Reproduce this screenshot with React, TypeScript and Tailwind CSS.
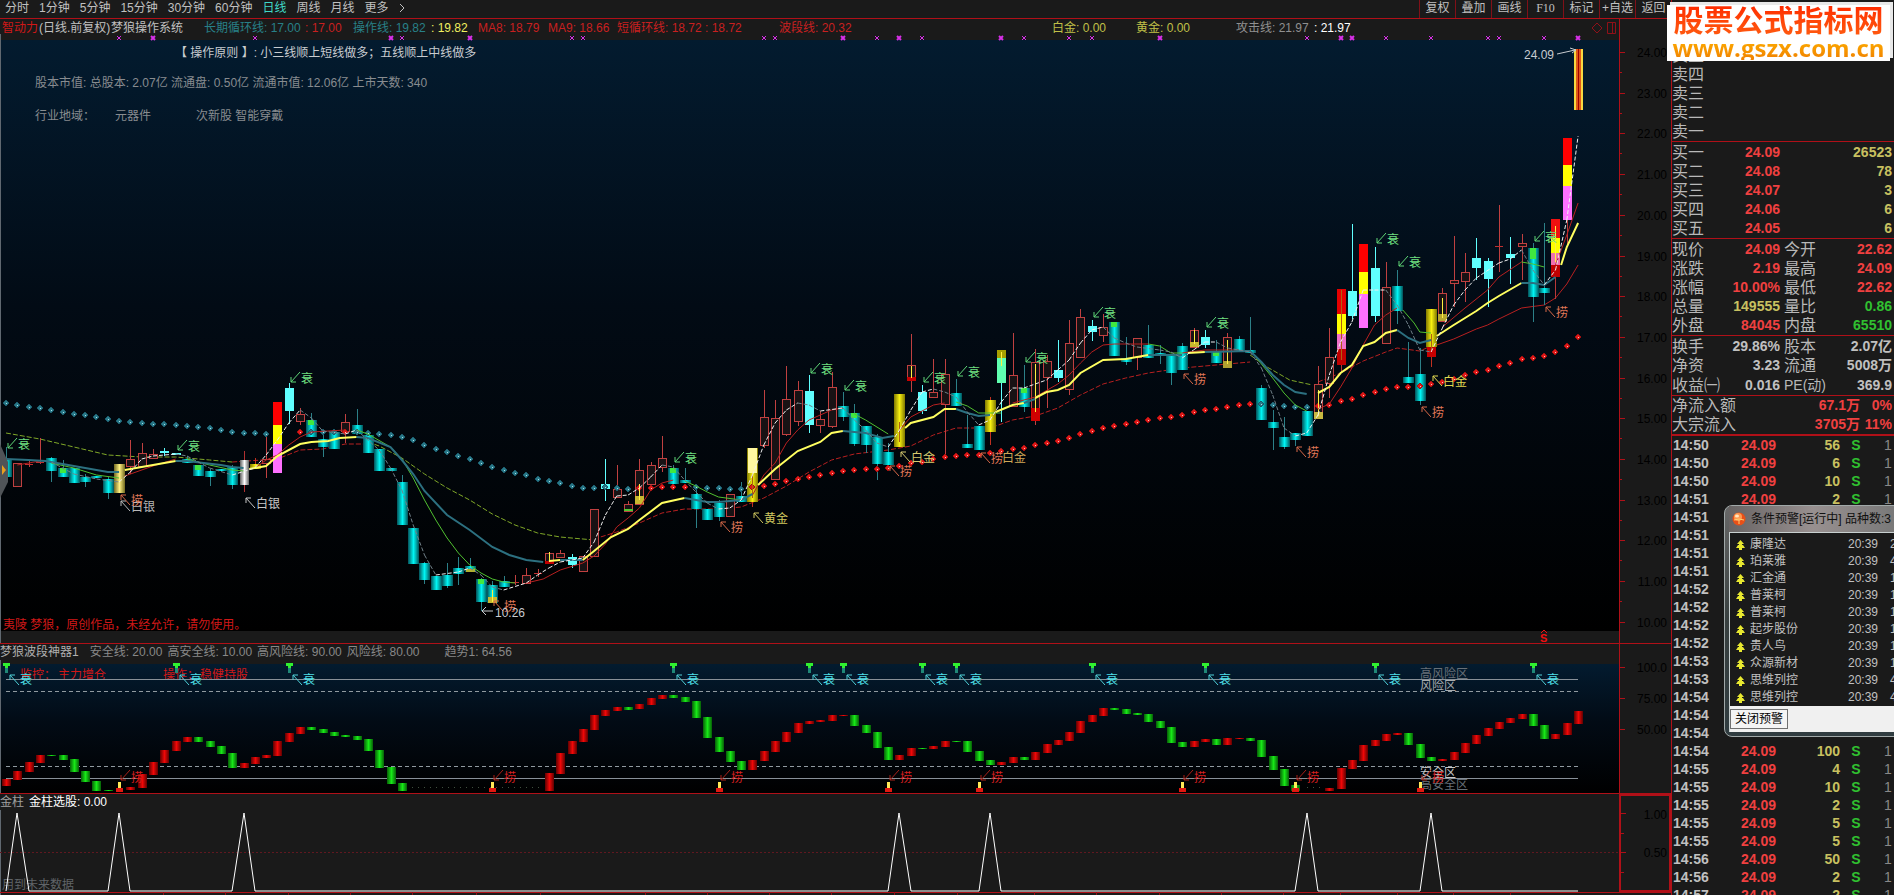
import React from 'react';
import { clsx } from 'clsx';

type Pt = [number, number];
type Segment = { color: string; pts: Pt[] };
type Candle = [number, string, number, number, number?, number?];

const STEP = 11.31;
const cx = (i: number) => Math.round(6 + i * STEP);

const toPath = (pts: Pt[]) =>
  pts.map(([i, y], n) => `${n === 0 ? 'M' : 'L'}${(6 + i * STEP).toFixed(1)} ${y}`).join(' ');

const periods = ['分时', '1分钟', '5分钟', '15分钟', '30分钟', '60分钟', '日线', '周线', '月线', '更多'];
const tools = ['复权', '叠加', '画线', 'F10', '标记', '+自选', '返回'];

// index, kind, body top, body bottom, high, low
// c = teal bar, b = bright bar, r = hollow, y = gold, p = pale gold, w = silver
const candles: Candle[] = [
  [0, 'c', 459, 477, 447], [1, 'r', 463, 486], [2, 'x', 464, 464, 461, 467], [3, 'x', 462, 462, 438, 464],
  [4, 'c', 458, 471, 457, 482], [5, 'c', 468, 477, 460], [6, 'c', 468, 483], [7, 'c', 477, 482, 474, 487],
  [8, 'c', 476, 478], [9, 'c', 479, 493, 477, 499], [10, 'p', 464, 493], [11, 'r', 459, 466, 440, 474],
  [12, 'r', 453, 466, 443], [13, 'r', 454, 458, 449], [14, 'b', 451, 453, 448, 456], [15, 'b', 453, 455],
  [16, 'c', 459, 463, 456], [17, 'c', 465, 476], [18, 'c', 471, 477, 469, 486], [19, 'c', 469, 471],
  [20, 'c', 467, 485, 465, 489], [21, 'w', 460, 485, 451, 492], [22, 'y', 464, 469, 458], [23, 'r', 459, 463, 435, 478],
  [25, 'b', 388, 411, 383, 424], [26, 'r', 414, 421, 408, 425], [27, 'c', 420, 437, 413], [28, 'c', 439, 447, 430, 457],
  [29, 'c', 432, 449], [30, 'r', 422, 431, 414, 443], [31, 'c', 425, 434, 409], [32, 'c', 435, 453],
  [33, 'c', 449, 471], [34, 'c', 468, 471], [35, 'c', 482, 525, 475], [36, 'c', 528, 564], [37, 'c', 563, 580, 562, 584],
  [38, 'c', 576, 590], [39, 'c', 575, 586, 563, 588], [40, 'c', 568, 574, 557, 585], [41, 'c', 566, 572, 558],
  [42, 'c', 579, 602, 578, 611], [43, 'c', 585, 603, 581], [44, 'c', 581, 587, 576], [45, 'x', 582, 582, 575, 585],
  [46, 'r', 575, 583, 568], [47, 'x', 573, 573, 569, 577], [48, 'r', 553, 563], [49, 'r', 553, 557, 550],
  [50, 'b', 557, 565, 554, 568], [51, 'r', 556, 571], [52, 'r', 509, 556], [53, 'b', 484, 489, 459, 501],
  [54, 'r', 489, 497, 465], [55, 'r', 504, 511, 501], [56, 'r', 470, 504, 459], [57, 'r', 465, 484, 462],
  [58, 'r', 458, 467, 436, 472], [59, 'c', 468, 484, 465], [60, 'c', 480, 483, 468], [61, 'c', 494, 509, 490, 528],
  [62, 'c', 509, 520], [63, 'c', 503, 517, 500, 521], [64, 'r', 494, 516], [65, 'c', 496, 502, 482],
  [66, 'y', 448, 502, 448, 507], [67, 'r', 417, 445, 390, 448], [68, 'r', 418, 479, 400], [69, 'r', 399, 434, 366, 436],
  [70, 'r', 390, 421, 381, 426], [71, 'b', 391, 425, 375, 433], [72, 'r', 419, 425, 411, 433], [73, 'r', 387, 426, 372, 428],
  [74, 'c', 406, 417, 392, 421], [75, 'c', 413, 444, 404, 446], [76, 'c', 426, 445, 426, 453], [77, 'c', 437, 464, 434, 480],
  [78, 'c', 452, 465, 443], [79, 'y', 394, 447], [80, 'r', 365, 380, 334, 392], [81, 'b', 392, 411, 385, 414],
  [82, 'r', 392, 397, 359], [83, 'r', 374, 404, 359, 457], [84, 'c', 393, 406, 379], [85, 'c', 444, 448, 415],
  [86, 'c', 426, 450], [87, 'y', 400, 432, 397, 445], [88, 'b', 358, 383, 350, 422], [89, 'r', 375, 406, 333],
  [90, 'c', 388, 407, 365, 412], [91, 'r', 362, 408, 349, 425], [92, 'r', 361, 377, 355, 408], [93, 'b', 370, 378, 340, 382],
  [94, 'r', 343, 389, 320, 395], [95, 'r', 317, 357, 309], [96, 'b', 326, 332, 320, 341], [97, 'r', 327, 335, 314, 342],
  [98, 'c', 322, 356], [99, 'c', 358, 362, 337, 365], [100, 'r', 338, 357, 338, 370], [101, 'c', 345, 358, 325],
  [102, 'c', 353, 356, 345, 364], [103, 'c', 356, 373, 356, 385], [104, 'c', 346, 370, 343], [105, 'r', 330, 347, 328],
  [106, 'b', 337, 345, 330, 348], [107, 'c', 351, 363, 340], [108, 'r', 337, 361, 333], [109, 'c', 339, 352, 336],
  [110, 'c', 350, 353, 317], [111, 'c', 388, 420, 385], [112, 'c', 422, 428, 410, 450], [113, 'c', 437, 447, 417, 449],
  [114, 'c', 433, 440, 433, 446], [115, 'c', 411, 436], [116, 'r', 384, 412, 366], [117, 'r', 357, 383, 328, 398],
  [119, 'b', 291, 316, 224, 319], [121, 'b', 268, 316, 247, 322], [122, 'r', 287, 343, 262], [123, 'c', 286, 311, 270, 324],
  [124, 'c', 377, 383, 342], [125, 'c', 374, 401, 348, 405], [126, 'y', 309, 347, 309, 367], [127, 'r', 293, 321, 288],
  [128, 'r', 280, 283, 236, 307], [129, 'r', 272, 281, 253, 302], [130, 'b', 258, 268, 238, 280], [131, 'b', 261, 279, 258, 307],
  [132, 'x', 246, 246, 205, 272], [133, 'b', 254, 258, 237, 284], [134, 'r', 243, 246, 234, 280], [135, 'c', 248, 297, 243, 322],
  [136, 'c', 288, 293, 223, 305],
];

// solid blocks painted over or instead of a body
const blocks: [number, string, number, number][] = [
  [24, '#ff0000', 402, 425], [24, '#ffff00', 425, 444], [24, '#ff70ff', 444, 473],
  [118, '#e60000', 289, 314], [118, '#ffff00', 314, 334], [118, '#f070c8', 334, 349], [118, '#c00000', 349, 365],
  [120, '#ff0000', 244, 272], [120, '#ffff00', 272, 294], [120, '#ff70ff', 294, 328],
  [126, '#c80000', 347, 357], [137, '#f01010', 219, 238], [137, '#ffff00', 238, 253],
  [137, '#f070b0', 253, 265], [137, '#c00000', 265, 277],
  [138, '#ff0000', 138, 165], [138, '#ffff00', 165, 186], [138, '#ff70ff', 186, 220],
  [80, '#c80000', 377, 381], [91, '#d00000', 408, 421], [88, '#a8a000', 350, 358], [88, '#60ffb0', 358, 383],
  [56, '#c8b830', 496, 504], [105, '#c8b830', 342, 347], [108, '#b0a030', 361, 368], [116, '#c8b840', 412, 419],
  [127, '#b8a830', 314, 321], [41, '#b0b030', 569, 572], [43, '#c8b830', 597, 603], [55, '#50c830', 509, 511],
  [48, '#c00000', 561, 564], [66, '#fff8a0', 448, 473],
];

const greenCaps: Pt[] = [[5, 468], [17, 465], [27, 420], [42, 579], [59, 468], [75, 413], [90, 388], [98, 322], [107, 351], [135, 248]];
const cores: [number, number, number][] = [
  [43, 590, 602], [48, 552, 562], [80, 366, 378], [91, 364, 412], [105, 330, 344], [108, 340, 364], [116, 390, 416],
  [118, 290, 360], [126, 334, 350], [127, 298, 318], [88, 352, 366], [66, 474, 498], [79, 422, 442], [137, 226, 262], [56, 484, 500],
];
const darkCores = [66, 79, 118, 126];

const trendLine: Segment[] = [
  { color: 'teal', pts: [[0, 459], [2, 460], [3.5, 461], [5, 464], [7, 468], [9, 472], [10, 472]] },
  { color: 'gold', pts: [[10.5, 470], [12, 467], [14, 463], [15, 461]] },
  { color: 'teal', pts: [[15, 461], [16, 461], [17.5, 463], [19, 465], [20, 467], [21, 468]] },
  { color: 'gold', pts: [[21.5, 469], [23, 466], [24, 456], [26, 444], [27, 442], [28.5, 441], [29.5, 438], [31, 437]] },
  { color: 'teal', pts: [[31, 437], [32, 438], [34, 447], [35, 460], [36, 474], [37, 491], [39, 515], [41, 530], [43, 547], [44.5, 555], [46, 560], [47.5, 562]] },
  { color: 'gold', pts: [[48, 561], [49, 560]] },
  { color: 'teal', pts: [[49, 560], [51, 560]] },
  { color: 'gold', pts: [[51, 560], [52, 551], [53.5, 537], [55, 529], [56, 520], [58, 503], [60, 498]] },
  { color: 'teal', pts: [[60, 498], [62, 502], [63, 502], [65, 500], [66, 494]] },
  { color: 'gold', pts: [[66.5, 485], [68, 469], [70, 451], [72, 442], [73, 433], [74, 431]] },
  { color: 'teal', pts: [[74, 431], [76, 433], [77.5, 438], [78.5, 436]] },
  { color: 'gold', pts: [[79.5, 428], [80, 423], [82, 417], [83, 409], [84, 409]] },
  { color: 'teal', pts: [[84, 409], [85, 413], [86, 416], [87, 415]] },
  { color: 'gold', pts: [[87.5, 412], [89, 405], [90, 403]] },
  { color: 'teal', pts: [[90, 403], [91, 399]] },
  { color: 'gold', pts: [[91, 398], [92, 392], [93, 390], [94, 385], [95, 373], [97, 360], [99, 359], [101, 355]] },
  { color: 'teal', pts: [[101, 355], [104, 355]] },
  { color: 'gold', pts: [[104.5, 353], [106, 352]] },
  { color: 'teal', pts: [[106, 352], [110, 351], [111, 362], [112, 375], [113, 385], [114, 392], [115, 394]] },
  { color: 'gold', pts: [[116, 393], [117, 387], [118, 373], [119, 365], [120, 346], [121, 342], [122, 333], [123, 330]] },
  { color: 'teal', pts: [[123, 330], [124, 338], [125, 343], [126, 340]] },
  { color: 'gold', pts: [[126.5, 336], [128, 325], [130, 311], [131, 303], [132, 296], [134, 283]] },
  { color: 'teal', pts: [[134, 283], [135, 283], [136, 285], [137, 277]] },
  { color: 'gold', pts: [[137.5, 265], [138, 247], [139, 223]] },
];

const shortCycle: Segment[] = [
  { color: 'red', pts: [[1, 465], [3, 461]] },
  { color: 'green', pts: [[4, 463], [6, 468], [8, 475], [10, 478]] },
  { color: 'red', pts: [[10.5, 476], [13, 466], [15, 459]] },
  { color: 'green', pts: [[16, 459], [18, 465], [20, 470], [21, 471]] },
  { color: 'red', pts: [[22, 468], [23, 460], [24, 455], [25, 445], [26, 437], [27, 432], [30, 430]] },
  { color: 'green', pts: [[31, 430], [32, 434], [34, 447], [35, 459], [36, 478], [37, 500], [38, 520], [39, 538], [40, 553], [41, 565], [42, 573], [43, 579], [44, 582], [45, 583]] },
  { color: 'red', pts: [[46, 583], [47.5, 579], [49, 570], [51, 563], [52, 556], [53, 544], [54, 527], [55, 518], [56, 508], [57, 490], [58, 483], [59, 480]] },
  { color: 'green', pts: [[60, 481], [61, 486], [62, 492], [63, 497], [65, 500]] },
  { color: 'red', pts: [[66, 495], [67, 475], [68, 463], [69, 443], [70, 430], [71, 420], [73, 410], [74, 408]] },
  { color: 'green', pts: [[75, 414], [76, 420], [78, 434]] },
  { color: 'red', pts: [[79, 430], [80, 417], [82, 405], [83, 403]] },
  { color: 'green', pts: [[84, 402], [85, 406], [86, 413], [88, 413]] },
  { color: 'red', pts: [[89, 403], [91, 397], [93, 384], [94, 375], [95, 363], [96, 352], [97, 345], [98, 344], [101, 344]] },
  { color: 'green', pts: [[101, 344], [102, 346], [103, 353], [104, 353]] },
  { color: 'red', pts: [[104, 353], [106, 350], [109, 350]] },
  { color: 'green', pts: [[110, 350], [111, 364], [112, 378], [113, 393], [114, 405], [115, 411]] },
  { color: 'red', pts: [[116, 409], [117, 404], [118, 387], [119, 368], [120, 345], [121, 325], [122, 315], [123, 308]] },
  { color: 'green', pts: [[123.5, 310], [124.5, 323], [125, 332], [126, 333]] },
  { color: 'red', pts: [[127, 327], [129, 308], [131, 290], [132, 277], [134, 262]] },
  { color: 'green', pts: [[134, 262], [135, 264], [136, 267]] },
  { color: 'red', pts: [[137, 265], [138, 235], [139, 203]] },
];

const swingLine: Segment[] = [
  { color: 'olive', pts: [[0, 433], [3, 439], [6, 447], [9, 455], [12, 457], [15, 457], [18, 460], [20, 462]] },
  { color: 'red', pts: [[20, 462], [24, 459], [26, 450], [28, 449], [30, 444], [32, 444]] },
  { color: 'olive', pts: [[32, 442], [33, 446], [35, 458], [37, 474], [39, 488], [41, 500], [43, 514], [45, 525], [47, 533], [49, 537], [52, 540]] },
  { color: 'red', pts: [[52, 539], [54, 532], [56, 523], [58, 513], [60, 509], [63, 509], [65, 507], [67, 498], [69, 486], [71, 472], [73, 460], [75, 454], [78, 450], [80, 446], [82, 435], [84, 428], [87, 428], [89, 420], [91, 416], [93, 408], [95, 395], [97, 384], [99, 378], [101, 373], [104, 368], [107, 365], [110, 362]] },
  { color: 'olive', pts: [[110, 355], [111.5, 367], [113.5, 380], [115.5, 385]] },
  { color: 'red', pts: [[116, 382], [118, 373], [120, 361], [122, 352], [123, 348], [125, 351], [126, 346]] },
];

const swingTail: Pt[] = [[126.5, 345], [128, 339], [130, 329], [131, 325], [132, 319], [134, 308], [136, 305], [137, 298], [138, 284], [139, 265]];

const attackLine: Pt[] = [
  [4, 462], [6, 474], [8, 479], [10, 482], [11, 472], [12, 459], [13, 456], [15, 454], [16, 456], [18, 468], [20, 475],
  [22, 468], [23, 455], [24, 440], [25, 423], [26, 410], [27, 418], [28, 431], [30, 434], [31, 430], [33, 450], [34, 468],
  [35, 490], [36, 525], [37, 555], [38, 575], [40, 572], [41, 568], [42, 575], [43, 587], [44, 590], [46, 583], [47, 575],
  [48, 568], [49, 562], [51, 558], [52, 542], [53, 515], [54, 496], [55, 495], [56, 488], [57, 477], [58, 465], [59, 467],
  [60, 480], [61, 492], [62, 503], [63, 509], [64, 508], [65, 500], [66, 475], [67, 445], [68, 423], [69, 410], [70, 403],
  [71, 405], [72, 411], [74, 408], [75, 420], [76, 430], [77, 443], [78, 447], [79, 430], [80, 410], [81, 392], [82, 389],
  [83, 392], [84, 397], [85, 412], [86, 425], [87, 420], [88, 402], [89, 388], [90, 388], [91, 384], [92, 380], [93, 370],
  [94, 360], [95, 343], [96, 330], [97, 327], [98, 338], [99, 343], [100, 347], [102, 350], [103, 352], [104, 358],
  [105, 350], [106, 342], [107, 342], [108, 348], [110, 352], [111, 368], [112, 395], [113, 428], [114, 436], [115, 433],
  [116, 415], [117, 375], [118, 342], [119, 322], [120, 290], [121, 290], [122, 290], [123, 305], [124, 325], [125, 350],
  [126, 352], [127, 328], [128, 305], [129, 290], [130, 278], [132, 263], [133, 259], [134, 250], [135, 270], [136, 285],
  [137, 270], [138, 220], [139, 136],
];

// white while the line climbs, grey while it falls
const attackLegs = (rising: boolean) =>
  attackLine
    .slice(1)
    .map((p, n) => [attackLine[n], p] as Pt[])
    .filter(([a, b]) => b[1] <= a[1] === rising)
    .map(toPath)
    .join(' ');

const cycleDots = [
  403, 405, 407, 408, 410, 412, 414, 415, 417, 419, 421, 422, 423, 424, 424, 425, 426, 427, 428, 430, 432, 433, 433, 434,
  434, 433, 432, 432, 432, 432, 432, 432, 433, 434, 435, 437, 440, 445, 449, 452, 456, 459, 463, 467, 470, 473, 475, 479,
  481, 483, 486, 488, 488, 487, 488, 489, 488, 488, 487, 487, 487, 487, 488, 488, 489, 489, 487, 486, 484, 481, 479, 477,
  475, 473, 471, 470, 469, 469, 468, 466, 463, 462, 459, 457, 456, 455, 455, 453, 451, 449, 448, 445, 443, 441, 438, 434,
  431, 428, 426, 424, 422, 420, 418, 417, 415, 412, 410, 409, 407, 405, 404, 404, 405, 406, 407, 407, 406, 405, 401, 399,
  395, 392, 389, 387, 387, 386, 384, 382, 379, 375, 372, 370, 366, 363, 359, 358, 356, 352, 346, 337,
];

const dotIsRed = (i: number) => (i >= 24 && i <= 26) || i === 30 || (i >= 56 && i <= 60) || (i >= 66 && i <= 110) || i >= 116;

// marker index and label centre
const fading: Pt[] = [[0, 444], [15, 446], [25, 378], [59, 458], [71, 369], [74, 386], [81, 378], [84, 372], [90, 358], [96, 313], [106, 323], [121, 239], [123, 262], [135, 237]];
const fishing: Pt[] = [[10, 500], [43, 606], [63, 527], [78, 471], [86, 458], [104, 379], [114, 452], [125, 412], [136, 312]];
const peaks = [0, 15, 25, 59, 71, 74, 81, 84, 96, 106, 121, 135];
const metals: [number, number, string, string][] = [
  [10, 506, '白银', '#b8b8b8'], [21, 503, '白银', '#c8c8c8'], [66, 518, '黄金', '#d0c860'],
  [79, 457, '白金', '#d8cc70'], [87, 457, '白金', '#d0a858'], [126, 381, '白金', '#e0d850'],
];

const crosses = [10, 13, 22, 34, 35, 41, 50, 51, 67, 68, 74, 77, 79, 81, 88, 90, 94, 96, 102, 115, 118, 119, 122, 126, 131, 132, 136, 139];
const boldCrosses = [13, 34, 41, 74, 79, 88, 102, 118, 119, 139];

const prices = ['24.00', '23.00', '22.00', '21.00', '20.00', '19.00', '18.00', '17.00', '16.00', '15.00', '14.00', '13.00', '12.00', '11.00', '10.00'];

// trend oscillator bars, one per day: colour, top, bottom
const R = 'r';
const G = 'g';
const bars: ([string, number, number] | null)[] = [
  [R, 779, 786], [R, 771, 780], [R, 762, 772], [R, 755, 763], [G, 755, 756], [G, 755, 760], [G, 759, 772], [G, 771, 782],
  [G, 781, 791], [G, 790, 791], null, [R, 787, 790], [R, 774, 788], [R, 762, 775], [R, 750, 763], [R, 741, 751],
  [R, 737, 742], [G, 737, 742], [G, 741, 747], [G, 746, 754], [G, 753, 768], [R, 763, 768], [R, 757, 764], [R, 755, 758],
  [R, 741, 756], [R, 733, 742], [R, 727, 734], [G, 727, 730], [G, 729, 733], [G, 732, 736], [G, 735, 737], [G, 736, 740],
  [G, 739, 751], [G, 750, 768], [G, 767, 784], [G, 783, 791], null, null, null, null, null, null, null, null, null, null,
  null, null, [R, 773, 791], [R, 753, 774], [R, 741, 754], [R, 729, 742], [R, 715, 730], [R, 710, 716], [R, 707, 711],
  [G, 707, 710], [R, 704, 709], [R, 698, 705], [R, 695, 699], [G, 695, 698], [G, 697, 702], [G, 701, 718], [G, 717, 738],
  [G, 737, 752], [G, 751, 762], [G, 761, 770], [R, 760, 770], [R, 751, 761], [R, 741, 752], [R, 732, 742], [R, 723, 733],
  [R, 721, 724], [R, 720, 722], [R, 715, 721], [R, 715, 716], [G, 715, 726], [G, 725, 733], [G, 732, 748], [G, 747, 760],
  [R, 755, 760], [R, 748, 756], [G, 748, 749], [R, 746, 749], [R, 741, 747], [G, 741, 742], [G, 741, 752], [G, 751, 761],
  [G, 760, 765], [R, 762, 765], [R, 757, 763], [G, 757, 760], [R, 752, 760], [R, 744, 753], [R, 740, 745], [R, 732, 741],
  [R, 721, 733], [R, 715, 722], [R, 708, 716], [G, 708, 710], [G, 709, 714], [G, 713, 715], [G, 714, 722], [G, 721, 728],
  [G, 727, 743], [G, 742, 747], [R, 741, 747], [R, 739, 742], [G, 739, 745], [R, 738, 745], [R, 738, 739], [G, 738, 741],
  [G, 740, 757], [G, 756, 770], [G, 769, 786], [G, 785, 791], null, null, [R, 788, 791], [R, 768, 789], [R, 760, 769],
  [R, 745, 761], [R, 740, 746], [R, 734, 741], [R, 733, 735], [G, 733, 745], [G, 744, 758], [G, 757, 761], [R, 759, 761],
  [R, 752, 760], [R, 743, 753], [R, 735, 744], [R, 728, 736], [R, 722, 729], [R, 718, 723], [R, 714, 719], [G, 714, 726],
  [G, 725, 739], [R, 734, 739], [R, 723, 735], [R, 711, 724],
];

const spikes = [1, 10, 21, 79, 87, 115, 126];
const spikePath = `M${cx(0)} 891 ${spikes.map((i) => `L${cx(i - 1)} 891 L${cx(i)} 813 L${cx(i + 1)} 891`).join(' ')} L${cx(139)} 891`;

const buyRows = [
  ['买一', '24.09', '26523'],
  ['买二', '24.08', '78'],
  ['买三', '24.07', '3'],
  ['买四', '24.06', '6'],
  ['买五', '24.05', '6'],
];

const RED = 'text-[#f04040]';
const YEL = 'text-[#c8c060]';
const GRN = 'text-[#30c030]';
const GRY = 'text-[#c0c0c0]';

const quoteRows = [
  ['现价', '24.09', RED, '今开', '22.62', RED],
  ['涨跌', '2.19', RED, '最高', '24.09', RED],
  ['涨幅', '10.00%', RED, '最低', '22.62', RED],
  ['总量', '149555', YEL, '量比', '0.86', GRN],
  ['外盘', '84045', RED, '内盘', '65510', GRN],
];

const shareRows = [
  ['换手', '29.86%', GRY, '股本', '2.07亿', GRY],
  ['净资', '3.23', GRY, '流通', '5008万', GRY],
  ['收益㈠', '0.016', GRY, 'PE(动)', '369.9', GRY],
];

const ticks: [string, string?][] = [
  ['14:50', '56'], ['14:50', '6'], ['14:50', '10'], ['14:51', '2'], ['14:51'], ['14:51'], ['14:51'], ['14:51'],
  ['14:52'], ['14:52'], ['14:52'], ['14:52'], ['14:53'], ['14:53'], ['14:54'], ['14:54'], ['14:54'],
  ['14:54', '100'], ['14:55', '4'], ['14:55', '10'], ['14:55', '2'], ['14:55', '5'], ['14:55', '5'],
  ['14:56', '50'], ['14:56', '2'], ['14:57', '2'],
];

const alerts = [
  ['康隆达', '2'], ['珀莱雅', '4'], ['汇金通', '1'], ['普莱柯', '1'], ['普莱柯', '1'],
  ['起步股份', '1'], ['贵人鸟', '1'], ['众源新材', '1'], ['思维列控', '4'], ['思维列控', '4'],
];

const lineColors: Record<string, string> = {
  teal: '#2c7080',
  gold: '#ffff60',
  red: '#b82020',
  green: '#50c030',
  olive: '#80a828',
};

const wickColors: Record<string, string> = { c: '#2c8088', b: '#60ffff', r: '#c04040', x: '#c04040', y: '#c03020', p: '#c0a030', w: '#b03030' };
const bodyFills: Record<string, string> = { c: 'url(#bar-teal)', b: '#60ffff', y: 'url(#bar-gold)', p: 'url(#bar-pale)', w: 'url(#bar-silver)' };

const CandleShape = ({ c }: { c: Candle }) => {
  const [i, kind, top, bottom, high = top, low = bottom] = c;
  const x = cx(i);
  const wide = kind === 'y' || kind === 'p' || kind === 'c' ? 11 : 9;
  return (
    <g shapeRendering="crispEdges">
      {low > high && <line x1={x} x2={x} y1={high} y2={low} stroke={wickColors[kind]} />}
      {kind === 'x' && <line x1={x - 4} x2={x + 4} y1={top} y2={top} stroke="#c03030" />}
      {kind === 'r' && (
        <rect x={x - 4} y={top} width="8" height={bottom - top} fill="#181214" stroke="#c04040" />
      )}
      {bodyFills[kind] && (
        <rect x={x - (wide - 1) / 2} y={top} width={wide} height={bottom - top} fill={bodyFills[kind]} />
      )}
    </g>
  );
};

const Arrow = ({ x, y, color, dir }: { x: number; y: number; color: string; dir: 'down' | 'up' }) => (
  <path
    d={dir === 'down' ? `M${x + 9} ${y - 9} L${x} ${y + 1} M${x} ${y - 4} V${y + 1} H${x + 5}` : `M${x + 9} ${y + 10} L${x} ${y} M${x} ${y + 5} V${y} H${x + 5}`}
    stroke={color}
    fill="none"
  />
);

const MainChart = () => (
  <svg viewBox="0 34 1671 609" className="block w-full h-auto" fontSize="12">
    <defs>
      <linearGradient id="sky" x1="0" y1="0" x2="0" y2="1">
        <stop offset="0" stopColor="#031b2f" />
        <stop offset="0.45" stopColor="#020b15" />
        <stop offset="1" stopColor="#000000" />
      </linearGradient>
      <linearGradient id="bar-teal">
        <stop offset="0" stopColor="#045058" />
        <stop offset="0.3" stopColor="#00b8b8" />
        <stop offset="0.5" stopColor="#00f4f4" />
        <stop offset="0.7" stopColor="#00b8b8" />
        <stop offset="1" stopColor="#045058" />
      </linearGradient>
      <linearGradient id="bar-gold">
        <stop offset="0" stopColor="#807800" />
        <stop offset="0.5" stopColor="#f8f010" />
        <stop offset="1" stopColor="#807800" />
      </linearGradient>
      <linearGradient id="bar-pale">
        <stop offset="0" stopColor="#706820" />
        <stop offset="0.5" stopColor="#fff080" />
        <stop offset="1" stopColor="#706820" />
      </linearGradient>
      <linearGradient id="bar-silver">
        <stop offset="0" stopColor="#606060" />
        <stop offset="0.5" stopColor="#ffffff" />
        <stop offset="1" stopColor="#606060" />
      </linearGradient>
    </defs>
    <rect x="1" y="40" width="1618" height="591" fill="url(#sky)" />
    <path d="M0.5 34 V643" stroke="#606870" />

    {crosses.map((i) => (
      <path
        key={i}
        d={`M${cx(i) - 2} 36 l4 4 m0 -4 l-4 4`}
        stroke="#d830e8"
        strokeWidth={boldCrosses.includes(i) ? 2 : 1}
      />
    ))}

    <text x="175" y="57" fill="#c8ccd0">【 操作原则 】: 小三线顺上短线做多；五线顺上中线做多</text>
    <text x="35" y="87" fill="#888c90">股本市值: 总股本: 2.07亿 流通盘: 0.50亿 流通市值: 12.06亿 上市天数: 340</text>
    <text x="35" y="120" fill="#888c90">行业地域：</text>
    <text x="115" y="120" fill="#888c90">元器件</text>
    <text x="196" y="120" fill="#888c90">次新股 智能穿戴</text>

    {swingLine.map((s, n) => (
      <path key={n} d={toPath(s.pts)} stroke={lineColors[s.color]} strokeDasharray="5 2" fill="none" />
    ))}
    <path d={toPath(swingTail)} stroke="#b82020" fill="none" />
    {candles.map((c) => <CandleShape key={c[0]} c={c} />)}
    {cycleDots.map((y, i) =>
      i === 139 || ![24, 25].includes(i) ? (
        <g key={i}>
          <path
            d={`M${cx(i)} ${y - 3} L${cx(i) + 3} ${y} L${cx(i)} ${y + 3} L${cx(i) - 3} ${y} Z`}
            fill={dotIsRed(i) ? '#e01818' : '#287888'}
            stroke={dotIsRed(i) ? '#a01010' : '#1c5c6c'}
          />
          <rect x={cx(i)} y={y} width="1" height="1" fill={dotIsRed(i) ? '#ffc0b8' : '#a8e0e8'} />
        </g>
      ) : null
    )}
    <g shapeRendering="crispEdges">
      <path d={`M${cx(137)} 277 V299 M${cx(138)} 220 V247 M${cx(118)} 365 V372`} stroke="#b83838" />
      {blocks.map(([i, color, top, bottom], n) => (
        <rect key={n} x={cx(i) - 4} y={top} width="9" height={bottom - top} fill={color} />
      ))}
      {greenCaps.map(([i, y]) => (
        <rect key={i} x={cx(i) - 3} y={y} width="6" height={i === 135 ? 11 : 5} fill="#40e840" />
      ))}
      {cores.map(([i, a, b]) => (
        <line key={i} x1={cx(i)} x2={cx(i)} y1={a} y2={b} stroke={darkCores.includes(i) ? '#b06010' : '#fff040'} />
      ))}
      {/* last day */}
      <rect x={cx(139) - 4} y="49" width="9" height="61" fill="#f8d840" />
      <rect x={cx(139) - 2} y="49" width="5" height="61" fill="#e05818" />
      <rect x={cx(139)} y="49" width="1" height="61" fill="#a00000" />
    </g>
    {shortCycle.map((s, n) => (
      <path key={n} d={toPath(s.pts)} stroke={lineColors[s.color]} fill="none" />
    ))}
    {trendLine.map((s, n) => (
      <path key={n} d={toPath(s.pts)} stroke={lineColors[s.color]} strokeWidth="2" fill="none" />
    ))}
    <path d={attackLegs(true)} stroke="#f0f0f0" strokeDasharray="4 2" fill="none" />
    <path d={attackLegs(false)} stroke="#708088" strokeDasharray="4 2" fill="none" />

    {fading.map(([i, y]) => (
      <g key={i}>
        <Arrow x={cx(i) + 2} y={y + 3} color="#60d878" dir="down" />
        <text x={cx(i) + 12} y={y + 5} fill="#70e080">衰</text>
      </g>
    ))}
    {metals.map(([i, y, label, color]) => (
      <g key={i}>
        {i !== 87 && <Arrow x={cx(i) + 2} y={y - 5} color={color} dir="up" />}
        <text x={cx(i) + 12} y={y + 5} fill={color}>{label}</text>
      </g>
    ))}
    {fishing.map(([i, y]) => (
      <g key={i}>
        <Arrow x={cx(i) + 2} y={y - 5} color="#d86848" dir="up" />
        <text x={cx(i) + 12} y={y + 5} fill="#e07858">捞</text>
      </g>
    ))}

    <text x="1524" y="59" fill="#c8ccd0">24.09</text>
    <path d="M1557 54 L1575 50 M1570 48 L1576 50 L1572 53" stroke="#c8ccd0" fill="none" />
    <text x="495" y="617" fill="#c8ccd0">10.26</text>
    <path d="M482 611 H493 M486 607 L482 611 L486 615" stroke="#c8ccd0" fill="none" />
    <text x="3" y="629" fill="#d01818">夷陵 梦狼，原创作品，未经允许，请勿使用。</text>
    <text x="1540" y="642" fill="#f01010" fontWeight="bold" fontSize="11">S</text>
    <path d="M1541 633 L1544 630 L1547 633" stroke="#f01010" fill="none" />

    {/* side handle */}
    <path d="M0 444 L8 462 V482 L0 498 Z" fill="#505458" />
    <path d="M2 465 L6 470 L2 475 Z" fill="#e8a020" />

    <path d="M1619.5 34 V643" stroke="#b01018" />
    {prices.map((p, n) => (
      <g key={p}>
        <path d={`M1619 ${52 + Math.round(n * 40.7)}.5 h6`} stroke="#b01018" />
        {n < 14 && <path d={`M1619 ${72 + Math.round(n * 40.7)}.5 h3`} stroke="#b01018" />}
        <text x="1667" y={57 + Math.round(n * 40.7)} textAnchor="end" fill="#000000">{p}</text>
      </g>
    ))}
  </svg>
);

const WaveChart = () => (
  <svg viewBox="0 660 1671 133" className="block w-full h-auto" fontSize="12">
    <defs>
      <linearGradient id="bar-red">
        <stop offset="0" stopColor="#600000" />
        <stop offset="0.5" stopColor="#f00808" />
        <stop offset="1" stopColor="#600000" />
      </linearGradient>
      <linearGradient id="bar-green">
        <stop offset="0" stopColor="#066006" />
        <stop offset="0.5" stopColor="#18e818" />
        <stop offset="1" stopColor="#066006" />
      </linearGradient>
    </defs>
    <rect x="1" y="664" width="1618" height="129" fill="url(#sky)" />
    <path d="M0.5 660 V793" stroke="#606870" />
    <text x="20" y="679" fill="#d01818">监控：</text>
    <text x="58" y="679" fill="#d01818">主力增仓</text>
    <text x="163" y="679" fill="#d01818">操作：</text>
    <text x="200" y="679" fill="#d01818">稳健持股</text>
    <g shapeRendering="crispEdges">
      <path d="M6 679.5 H1578 M6 778.5 H1578" stroke="#889098" />
      <path d="M6 691.5 H1578 M6 766.5 H1578" stroke="#909aa0" strokeDasharray="4 3" />
      <path d="M412 787.5 H540 M1307 787.5 H1322" stroke="#405040" strokeDasharray="1 5" />
      {bars.map((b, i) =>
        b ? (
          <rect key={i} x={cx(i) - 4} y={b[1]} width="9" height={b[2] - b[1]} fill={b[0] === R ? 'url(#bar-red)' : 'url(#bar-green)'} />
        ) : null
      )}
    </g>
    <text x="1420" y="678" fill="#687078">高风险区</text>
    <text x="1420" y="690" fill="#a8acb0">风险区</text>
    <text x="1420" y="777" fill="#c8c8c8">安全区</text>
    <text x="1420" y="789" fill="#687078">高安全区</text>
    {peaks.map((i) => (
      <g key={i}>
        <rect x={cx(i) - 1} y="666" width="3" height="7" fill="#208878" />
        <rect x={cx(i) - 3} y="663" width="7" height="3" fill="#30f030" />
        <rect x={cx(i) - 1} y="666" width="3" height="2" fill="#30f030" />
        <Arrow x={cx(i) + 4} y={675} color="#50d0d8" dir="up" />
        <text x={cx(i) + 14} y="684" fill="#50e0e8">衰</text>
      </g>
    ))}
    {fishing.slice(0, 8).map(([i]) => (
      <g key={i}>
        <rect x={cx(i) - 1} y="782" width="3" height="6" fill="#ffe858" />
        <rect x={cx(i) - 3} y="788" width="7" height="4" fill="#e01810" />
        <Arrow x={cx(i) + 2} y={779} color="#a82018" dir="down" />
        <text x={cx(i) + 12} y="782" fill="#d82020">捞</text>
      </g>
    ))}
    <path d="M1619.5 660 V793" stroke="#b01018" />
    {[['100.0', 667], ['75.00', 698], ['50.00', 729]].map(([label, y]) => (
      <g key={label}>
        <path d={`M1619 ${y}.5 h6`} stroke="#b01018" />
        <text x="1667" y={Number(y) + 5} textAnchor="end" fill="#000000">{label}</text>
      </g>
    ))}
  </svg>
);

const PickChart = () => (
  <svg viewBox="0 810 1671 85" className="block w-full h-auto" fontSize="12">
    <path d="M0.5 810 V895" stroke="#606870" />
    <path d="M0 852.5 H1619" stroke="#601820" strokeDasharray="2 2" />
    <text x="2" y="889" fill="#606468">用到未来数据</text>
    <path d={spikePath} stroke="#ffffff" fill="none" />
    <path d="M0 892.5 H1671" stroke="#b01018" />
    {[163, 225, 288, 350, 412, 476, 540, 645, 707, 769, 831, 894, 957, 1034, 1096, 1159, 1221, 1283, 1340, 1397, 1453, 1510].map((x) => (
      <path key={x} d={`M${x}.5 892 V895`} stroke="#901018" />
    ))}
    <path d="M1620 810 V892 M1670 810 V892 M1619 891 H1671" stroke="#b01018" strokeWidth="2" />
    <path d="M1621 813.5 h5 M1621 833.5 h3 M1621 852.5 h5 M1621 872.5 h3" stroke="#b01018" />
    <text x="1667" y="819" textAnchor="end" fill="#000000">1.00</text>
    <text x="1667" y="857" textAnchor="end" fill="#000000">0.50</text>
  </svg>
);

const QuoteTable = ({ rows }: { rows: string[][] }) => (
  <table className="w-full table-fixed border-collapse">
    <tbody>
      {rows.map((r) => (
        <tr key={r[0]} className="h-[19px] leading-[19px]">
          <th scope="row" className="w-[50px] p-0 text-left text-base leading-[19px] font-normal whitespace-nowrap">{r[0]}</th>
          <td className={clsx('w-[58px] p-0 text-right text-sm leading-[19px] font-bold', r[2])}>{r[1]}</td>
          <th scope="row" className="w-[50px] p-0 pl-1 text-left text-base leading-[19px] font-normal whitespace-nowrap">
            {r[3] === 'PE(动)' ? <span className="text-sm">{r[3]}</span> : r[3]}
          </th>
          <td className={clsx('p-0 pr-0.5 text-right text-sm leading-[19px] font-bold', r[5])}>{r[4]}</td>
        </tr>
      ))}
    </tbody>
  </table>
);

const AlertWindow = () => (
  <section className="absolute top-[505px] -right-1 w-[174px] rounded-l-lg border border-[#a0a8a8] bg-linear-to-b from-[#686868] via-[#384040] to-[#303c40] pl-1 pb-1">
    <header className="flex h-[26px] items-center gap-[5px] overflow-hidden bg-linear-to-r from-[#686464] via-[#989090] to-[#787878] pl-px text-xs whitespace-nowrap text-[#101010]">
      <svg viewBox="0 0 14 14" className="ml-0.5 size-3.5 shrink-0">
        <circle cx="7" cy="7" r="6.5" fill="#e85018" />
        <circle cx="6" cy="5" r="4" fill="#ff9850" />
        <ellipse cx="5" cy="4" rx="2" ry="1.5" fill="#ffe8c0" />
        <path d="M2 8 Q7 6 12 8 M7 8 V12" stroke="#ffd070" fill="none" />
      </svg>
      <h2>条件预警[运行中] 品种数:3</h2>
    </header>
    <div className="border-t border-l border-[#c8d0d0] bg-[#1a1a1a] pt-[3px]">
      <table className="w-full table-fixed border-collapse text-xs">
        <tbody>
          {alerts.map(([name, count], n) => (
            <tr key={n} className="h-[17px] leading-[17px] text-[#c0c0c0]">
              <td className="w-5 p-0 pl-1.5 leading-[17px]">
                <svg viewBox="0 0 9 10" className="block h-2.5 w-[9px]">
                  <path d="M4.5 0 L8 4 H6 V5 H7 L9 8 H6 V10 H3 V8 H0 L2 5 H3 V4 H1 Z" fill="#e8e830" />
                </svg>
              </td>
              <td className="w-[98px] p-0 leading-[17px]">{name}</td>
              <td className="w-[42px] p-0 leading-[17px]">20:39</td>
              <td className="p-0 leading-[17px]">{count}</td>
            </tr>
          ))}
        </tbody>
      </table>
      <div className="flex h-[26px] items-center bg-[#f0f0f0]">
        <button type="button" className="h-5 border border-[#707070] bg-[#f4f4f4] px-1 text-xs leading-[18px] text-black">
          关闭预警
        </button>
      </div>
    </div>
  </section>
);

const Sidebar = () => (
  <aside className="relative w-[223px] shrink-0 border-l border-[#b01018] text-[#b8b8b8]">
    <div className="h-[46px]" />
    <div className="border-b border-[#b01018]">
      {['卖五', '卖四', '卖三', '卖二', '卖一'].map((s) => (
        <p key={s} className="h-[19px] text-base leading-[19px]">{s}</p>
      ))}
    </div>
    <div className="border-b border-[#b01018] pt-px">
      <table className="w-full table-fixed border-collapse">
        <tbody>
          {buyRows.map(([label, price, vol]) => (
            <tr key={label} className="h-[19px]">
              <th scope="row" className="w-[50px] p-0 text-left text-base leading-[19px] font-normal">{label}</th>
              <td className="w-[58px] p-0 text-right text-sm leading-[19px] font-bold text-[#f04040]">{price}</td>
              <td className="p-0 pr-0.5 text-right text-sm leading-[19px] font-bold text-[#c8c060]">{vol}</td>
            </tr>
          ))}
        </tbody>
      </table>
    </div>
    <div className="border-b border-[#b01018] pt-px">
      <QuoteTable rows={quoteRows} />
    </div>
    <div className="border-b border-[#b01018] pt-px">
      <QuoteTable rows={shareRows} />
    </div>
    <div className="border-b-2 border-[#b01018]">
      {[['净流入额', '67.1万', '0%'], ['大宗流入', '3705万', '11%']].map(([label, sum, pct]) => (
        <p key={label} className="flex h-[19px] items-center pr-0.5 text-sm leading-[19px] font-bold text-[#f04040]">
          <span className="flex-1 text-base leading-[19px] font-normal text-[#b8b8b8]">{label}</span>
          <span>{sum}</span>
          <span className="w-8 text-right">{pct}</span>
        </p>
      ))}
    </div>
    <table className="w-full table-fixed border-collapse text-sm font-bold">
      <tbody>
        {ticks.map(([time, vol], n) => (
          <tr key={n} className="h-[18px]">
            <td className="w-[50px] p-0 pl-px leading-[18px] text-[#c0c0c0]">{time}</td>
            <td className="w-[54px] p-0 text-right leading-[18px] text-[#f04040]">{vol && '24.09'}</td>
            <td className="w-16 p-0 text-right leading-[18px] text-[#c8c060]">{vol}</td>
            <td className="w-8 p-0 text-center leading-[18px] text-[#30c030]">{vol && 'S'}</td>
            <td className="p-0 pl-3 leading-[18px] font-normal text-[#888888]">{vol && '1'}</td>
          </tr>
        ))}
      </tbody>
    </table>

    <AlertWindow />

    <a
      href="#site"
      className="absolute top-[5px] right-1 flex h-14 w-[223px] flex-col items-center justify-center bg-white shadow-[3px_-3px_0_#e8e8e8]"
    >
      <span className="bg-linear-to-b from-[#ff2a00] to-[#ff5a10] bg-clip-text text-[30px] leading-[30px] font-bold whitespace-nowrap text-transparent">
        股票公式指标网
      </span>
      <span className="bg-linear-to-b from-[#ffb400] to-[#f08000] bg-clip-text font-['Open_Sans'] text-2xl leading-[24px] font-bold whitespace-nowrap text-transparent">
        www.gszx.com.cn
      </span>
    </a>
  </aside>
);

const AxisStub = () => <div className="w-[52px] shrink-0 self-stretch border-l border-[#b01018]" />;

export default function App() {
  return (
    <div className="flex h-screen w-full overflow-hidden bg-[#1a1a1a] font-['Liberation_Sans','Noto_Sans_CJK_SC',sans-serif] text-xs text-[#c0c0c0]">
      <main className="min-w-0 flex-1">
        <nav className="flex h-[19px] items-stretch border-b border-[#b01018]">
          <div className="flex flex-1 items-center gap-2.5 pb-0.5 pl-[5px] leading-[14px]">
            {periods.map((p) => (
              <button key={p} type="button" className={clsx('whitespace-nowrap', p === '日线' && 'text-[#40d8c8]')}>
                {p}
              </button>
            ))}
            <svg viewBox="0 0 6 10" className="h-2.5 w-1.5">
              <path d="M1 1 L5 5 L1 9" stroke="#c0c0c0" fill="none" />
            </svg>
          </div>
          {tools.map((t) => (
            <button
              key={t}
              type="button"
              className={clsx('w-9 border-l border-[#801018] pb-0.5 leading-[14px] whitespace-nowrap', t === 'F10' && "font-['Liberation_Serif']")}
            >
              {t}
            </button>
          ))}
        </nav>

        <section>
          <div className="flex h-[15px] items-center whitespace-nowrap">
            <div className="flex min-w-0 flex-1 items-center pt-[3px] pl-0.5 leading-[15px]">
              <span className="w-[37px] text-[#d01818]">智动力</span>
              <span className="w-[72px]">(日线.前复权)</span>
              <span className="w-[93px]">梦狼操作系统</span>
              <span className="w-[101px] text-[#288088]">长期循环线: 17.00</span>
              <span className="w-12 text-[#c82020]">: 17.00</span>
              <span className="w-[78px] text-[#288088]">操作线: 19.82</span>
              <span className="w-[47px] text-[#f0f060]">: 19.82</span>
              <span className="w-[70px] text-[#c82020]">MA8: 18.79</span>
              <span className="w-[69px] text-[#c82020]">MA9: 18.66</span>
              <span className="w-[162px] text-[#c82020]">短循环线: 18.72 : 18.72</span>
              <span className="w-[273px] text-[#c82020]">波段线: 20.32</span>
              <span className="w-[84px] text-[#c0c048]">白金: 0.00</span>
              <span className="w-[100px] text-[#c0c048]">黄金: 0.00</span>
              <span className="w-[78px] text-[#909090]">攻击线: 21.97</span>
              <span className="text-white">: 21.97</span>
              <svg viewBox="0 0 26 12" className="mr-0.5 ml-auto h-3 w-[26px]">
                <path d="M6 1 L11 6 L6 11 L1 6 Z M16.5 0.5 H24.5 V11.5 H16.5 Z M21.5 0.5 V11.5" stroke="#901018" fill="none" />
              </svg>
            </div>
            <AxisStub />
          </div>
          <MainChart />
        </section>

        <section className="border-t border-[#b01018]">
          <div className="flex h-4 items-center leading-4 whitespace-nowrap text-[#888888]">
            <div className="flex min-w-0 flex-1 gap-[5px]">
              <h2 className="mr-1.5 text-[#b0b0b0]">梦狼波段神器1</h2>
              <span>安全线: 20.00</span>
              <span>高安全线: 10.00</span>
              <span>高风险线: 90.00</span>
              <span>风险线: 80.00</span>
              <span className="ml-5">趋势1: 64.56</span>
            </div>
            <AxisStub />
          </div>
          <WaveChart />
        </section>

        <section className="border-t border-[#b01018]">
          <div className="flex h-4 items-center leading-4 whitespace-nowrap">
            <div className="flex flex-1 gap-[5px]">
              <h2 className="text-[#a0a0a0]">金柱</h2>
              <span className="text-white">金柱选股: 0.00</span>
            </div>
            <div className="w-[52px] shrink-0 self-stretch border-2 border-b-0 border-[#b01018]" />
          </div>
          <PickChart />
        </section>
      </main>
      <Sidebar />
    </div>
  );
}
